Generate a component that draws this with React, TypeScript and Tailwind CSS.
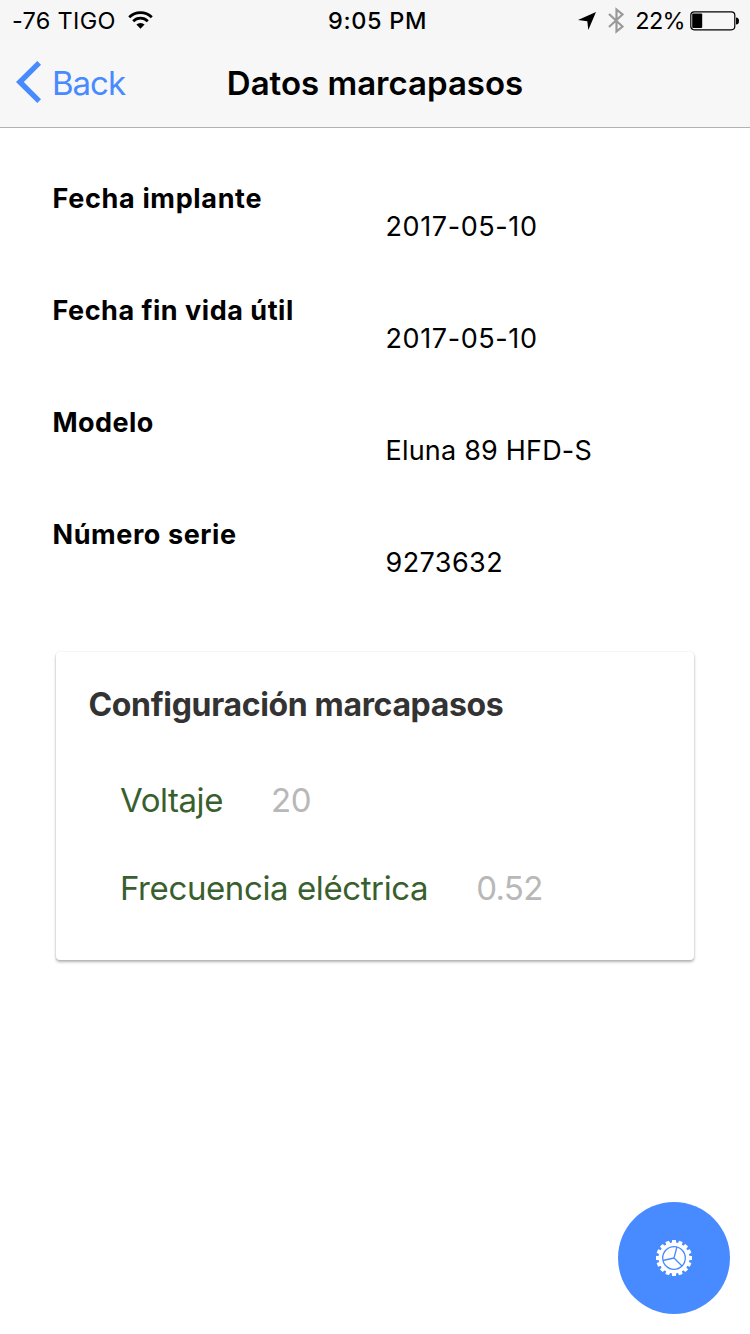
import React from "react";

const details = [
  { label: "Fecha implante", value: "2017-05-10", labelTracking: "tracking-[0.66px]", valueTracking: "tracking-[0.6px]" },
  { label: "Fecha fin vida útil", value: "2017-05-10", labelTracking: "tracking-[0.52px]", valueTracking: "tracking-[0.6px]" },
  { label: "Modelo", value: "Eluna 89 HFD-S", labelTracking: "tracking-[0.4px]", valueTracking: "tracking-[0.2px]" },
  { label: "Número serie", value: "9273632", labelTracking: "tracking-[0.58px]", valueTracking: "tracking-[0.42px]" },
];

const settings = [
  { label: "Voltaje", value: "20", tracking: "tracking-[-0.45px]", valueTracking: "tracking-[-0.4px]" },
  { label: "Frecuencia eléctrica", value: "0.52", tracking: "tracking-[-0.4px]", valueTracking: "tracking-[-0.7px]" },
];

function StatusBar() {
  return (
    <div className="grid h-10 grid-cols-[1fr_auto_1fr] items-center bg-[#f6f6f6] pt-px text-[23.5px] leading-10">
      <div className="flex items-center pl-3">
        <span className="tracking-[0.3px]">-76 TIGO</span>
        <svg className="mb-0.5 ml-3 h-[18px] w-[25px]" viewBox="0 0 25 18" fill="none" stroke="#000">
          <path d="M1.2 6.3a16 16 0 0 1 22.6 0" strokeWidth="2.7" />
          <path d="M5.2 10.2a10.3 10.3 0 0 1 14.6 0" strokeWidth="2.7" />
          <path d="M8.4 13.6a5.8 5.8 0 0 1 8.2 0L12.5 17.7z" fill="#000" stroke="none" />
        </svg>
      </div>
      <div className="pl-[5px] font-medium tracking-[0.65px]">9:05 PM</div>
      <div className="flex items-center justify-end pr-[10px]">
        <svg className="mr-3 h-[18px] w-[18px]" viewBox="0 0 18 18">
          <path d="M18 0L10.300 18L9.300 9.200L0 8z" />
        </svg>
        <svg className="mr-[11px] mb-px h-[27px] w-4" viewBox="0 0 16 27" fill="none" stroke="#999" strokeWidth="2.2">
          <path d="M1 7l13.500 12.500L8.500 24.500V2.500l6 5L1 20" />
        </svg>
        <span className="tracking-[-0.7px]">22%</span>
        <svg className="mb-px ml-[5px] h-5 w-[50px]" viewBox="0 0 50 20">
          <rect x=".8" y=".8" width="44" height="18" rx="3.500" fill="none" stroke="#000" strokeWidth="1.2" />
          <rect x="2.200" y="2.500" width="10" height="14.500" rx="1" />
          <path d="M46 6.500q3 0 3 3.500t-3 3.500z" />
        </svg>
      </div>
    </div>
  );
}

function GearIcon() {
  return (
    <svg className="size-9" viewBox="-18 -18 36 36">
      <circle r="15.400" fill="#fff" />
      {Array.from({ length: 16 }, (_, i) => (
        <path key={i} d="M-2.300 -14L-1.900 -18H1.900L2.300 -14z" fill="#fff" transform={`rotate(${i * 22.5})`} />
      ))}
      <g fill="none" stroke="#488aff" strokeWidth="1.300">
        <circle r="11.300" />
        <path d="M0 0L2.900 -11M0 0L8 8M0 0L-11 2.500" />
      </g>
    </svg>
  );
}

export default function App() {
  return (
    <div className="flex h-[1334px] w-[750px] flex-col bg-white font-['Inter',sans-serif] text-black">
      <header className="h-32 border-b border-[#b2b2b2] bg-[#f7f7f7]">
        <StatusBar />
        <div className="grid h-[87px] grid-cols-[1fr_auto_1fr] items-center">
          <button className="flex items-center pl-4 text-[33px] tracking-[-1px] text-[#488aff]">
            <svg className="mr-[11px] mb-1 h-[42px] w-[25px]" viewBox="0 0 25 42">
              <path d="M21.300 0L0 21L21.300 42L25 38.300L7.800 21L25 3.700z" fill="#488aff" />
            </svg>
            Back
          </button>
          <h1 className="text-[33px] font-semibold">Datos marcapasos</h1>
        </div>
      </header>
      <main className="flex flex-1 flex-col">
        <dl className="pt-[57px] pl-[52.5px] text-[27px] leading-7">
          {details.map((d) => (
            <div key={d.label} className="grid h-28 grid-cols-[333px_1fr]">
              <dt className={`font-bold ${d.labelTracking}`}>{d.label}</dt>
              <dd className={`pt-7 ${d.valueTracking}`}>{d.value}</dd>
            </div>
          ))}
        </dl>
        <section className="mx-14 mt-[19px] h-[308px] rounded-[4px] px-8 pt-[33px] shadow-[0_2px_3px_rgba(0,0,0,0.3),0_0_2px_rgba(0,0,0,0.1)]">
          <h2 className="pl-[0.5px] text-[32px] leading-10 font-bold tracking-[-0.34px] text-[#333]">
            Configuración marcapasos
          </h2>
          <div className="pt-8">
            {settings.map((s) => (
              <div key={s.label} className="flex h-22 items-center pl-8 text-[33px]">
                <span className={`text-[#3a5f2e] ${s.tracking}`}>{s.label}</span>
                <span className={`pl-12 text-[#b8b8b8] ${s.valueTracking}`}>{s.value}</span>
              </div>
            ))}
          </div>
        </section>
        <button className="mt-auto mr-5 mb-5 flex size-28 items-center justify-center self-end rounded-full bg-[#488aff]">
          <GearIcon />
        </button>
      </main>
    </div>
  );
}
